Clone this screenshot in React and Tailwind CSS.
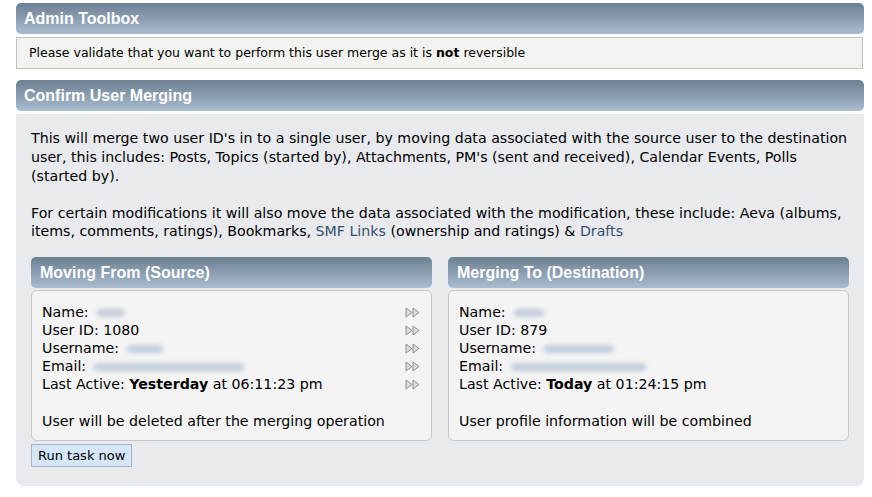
import React from 'react'

const body = { fontFamily: '"DejaVu Sans", Verdana, sans-serif' }
const head = { fontFamily: '"Liberation Sans", Arial, sans-serif' }

function Header({ children, className = '' }) {
  return (
    <div
      className={`h-[31px] rounded-[5px] bg-gradient-to-b from-[#6c7f93] to-[#aabdd0] text-white font-bold text-[16px] px-2 flex items-center ${className}`}
      style={head}
    >
      {children}
    </div>
  )
}

function Blur({ w }) {
  return (
    <span
      className="inline-block align-middle h-[8px] rounded-sm bg-[#c3cfdd] blur-[2px] ml-2"
      style={{ width: w }}
    />
  )
}

function Arrows() {
  return (
    <svg width="16" height="11" viewBox="0 0 16 11">
      <path d="M1 1 L7 5.5 L1 10 Z" fill="#dcdcdc" stroke="#909090" strokeWidth="1" />
      <path d="M8 1 L14 5.5 L8 10 Z" fill="#dcdcdc" stroke="#909090" strokeWidth="1" />
    </svg>
  )
}

function Row({ children, arrows }) {
  return (
    <div className="flex items-center justify-between h-[18px]">
      <div>{children}</div>
      {arrows && <Arrows />}
    </div>
  )
}

function UserBox({ title, rows, note, arrows }) {
  return (
    <div>
      <Header className="pl-[9px]">{title}</Header>
      <div className="mt-[2px] bg-[#f4f4f4] border border-[#c8c8c8] rounded-[6px] pl-[10px] pr-[10px] pt-[12px] pb-[9px] h-[151px]">
        {rows.map((r, i) => (
          <Row key={i} arrows={arrows}>{r}</Row>
        ))}
        <div className="mt-[19px]">{note}</div>
      </div>
    </div>
  )
}

export default function App() {
  return (
    <div className="w-[872px] h-[497px] bg-white text-[14.2px] text-black pt-[3px] pl-[16px] pr-[8px]" style={body}>
      <Header className="pl-[8px]">Admin Toolbox</Header>
      <div className="mt-[3px] h-[32px] bg-[#f3f3ef] border border-[#c2c2c2] flex items-center pl-[12px] mr-[1px] text-[12.5px]">
        <span>Please validate that you want to perform this user merge as it is <b>not</b> reversible</span>
      </div>

      <Header className="mt-[11px] pl-[8px]">Confirm User Merging</Header>
      <div className="mt-[3px] bg-[#e8eaee] rounded-b-[8px] px-[15px] pt-[15px] pb-[19px] leading-[19px]">
        <p>
          This will merge two user ID's in to a single user, by moving data associated with the source user to the destination user, this includes: Posts, Topics (started by), Attachments, PM's (sent and received), Calendar Events, Polls (started by).
        </p>
        <p className="mt-[18px] leading-[18px]">
          For certain modifications it will also move the data associated with the modification, these include: Aeva (albums, items, comments, ratings), Bookmarks, <span className="text-[#35506f]">SMF Links</span> (ownership and ratings) &amp; <span className="text-[#35506f]">Drafts</span>
        </p>

        <div className="mt-[17px] grid grid-cols-2 gap-[16px] leading-[18px]">
          <div>
            <UserBox
              title="Moving From (Source)"
              arrows
              rows={[
                <>Name:<Blur w={28} /></>,
                <>User ID: 1080</>,
                <>Username:<Blur w={36} /></>,
                <>Email:<Blur w={150} /></>,
                <>Last Active: <b>Yesterday</b> at 06:11:23 pm</>,
              ]}
              note="User will be deleted after the merging operation"
            />
            <button className="mt-[3px] h-[23px] px-[6px] bg-[#d4e6f7] border border-[#a3b3c4] text-[13px] leading-none" style={body}>
              Run task now
            </button>
          </div>
          <div>
            <UserBox
              title="Merging To (Destination)"
              rows={[
                <>Name:<Blur w={30} /></>,
                <>User ID: 879</>,
                <>Username:<Blur w={70} /></>,
                <>Email:<Blur w={135} /></>,
                <>Last Active: <b>Today</b> at 01:24:15 pm</>,
              ]}
              note="User profile information will be combined"
            />
          </div>
        </div>
      </div>
    </div>
  )
}
